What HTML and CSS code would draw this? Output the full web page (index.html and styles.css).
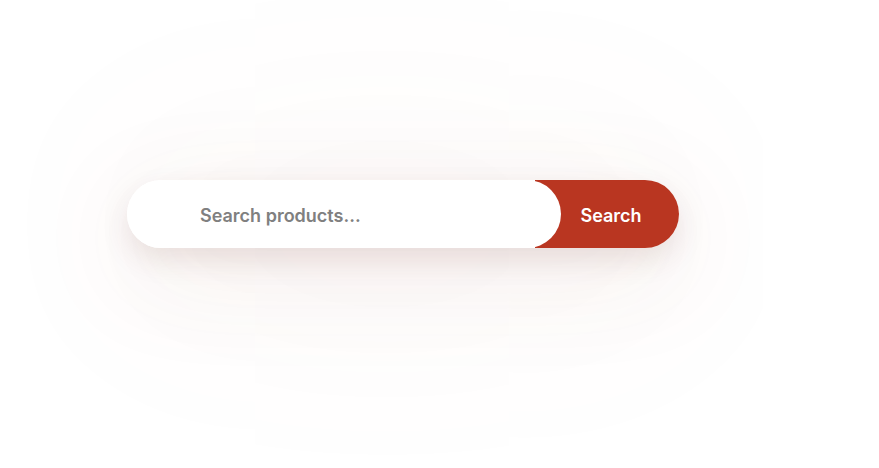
FILE: index.html
```html
<!DOCTYPE html>
<html lang="en">
<head>
<meta charset="utf-8">
<title>Search</title>
<link rel="stylesheet" href="styles.css">
</head>
<body>
<main class="stage">
  <form class="search">
    <input class="search-input" type="text" placeholder="Search products...">
    <button class="search-btn" type="button">Search</button>
  </form>
</main>
</body>
</html>
```
FILE: styles.css
```css
* { box-sizing: border-box; }
html, body { margin: 0; padding: 0; background: #ffffff; }
body { font-family: Inter, "Noto Sans", sans-serif; }
.stage {
  width: 879px;
  height: 468px;
  padding: 180px 0 0 127px;
}
.search {
  display: flex;
  align-items: stretch;
  width: 552px;
  height: 68px;
  border-radius: 34px;
  box-shadow: 0 12px 28px rgba(110, 50, 40, 0.12), 0 24px 110px rgba(160, 80, 60, 0.10), 0 10px 260px rgba(180, 100, 80, 0.09);
}
.search-input {
  position: relative;
  z-index: 1;
  width: 434px;
  flex: none;
  height: 68px;
  border: 0;
  outline: none;
  border-radius: 34px;
  background: #ffffff;
  padding: 2px 0 0 73px;
  font-family: Inter, "Noto Sans", sans-serif;
  font-size: 18px;
  font-weight: 600;
  color: #333;
}
.search-input::placeholder { color: #808080; opacity: 1; }
.search-btn {
  flex: 1;
  margin-left: -26px;
  border: 0;
  border-radius: 0 34px 34px 0;
  background: #b93621;
  color: #ffffff;
  font-family: Inter, "Noto Sans", sans-serif;
  font-size: 18px;
  font-weight: 600;
  padding: 2px 18px 0 26px;
  text-align: center;
  cursor: pointer;
}
```
